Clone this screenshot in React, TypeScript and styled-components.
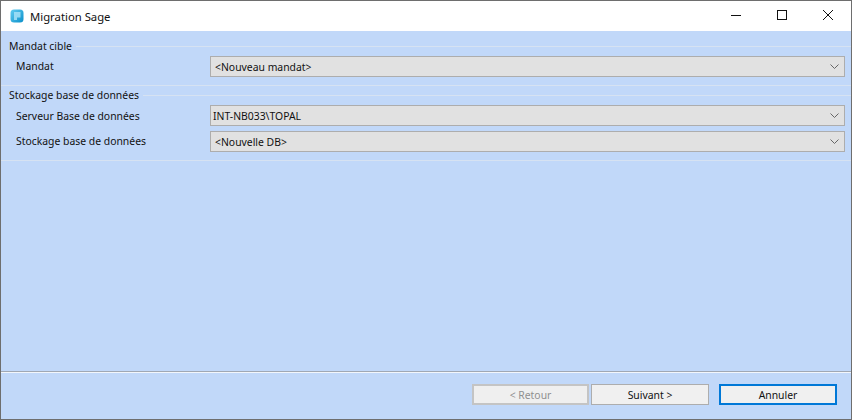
import React from "react";
import styled, { createGlobalStyle } from "styled-components";

const Global = createGlobalStyle`
  html, body { margin: 0; padding: 0; background: #c1d8f9; }
  body { overflow: hidden; }
`;

const Window = styled.div`
  box-sizing: border-box;
  width: 852px;
  height: 420px;
  border: 1px solid #6e6e6e;
  display: flex;
  flex-direction: column;
  background: #c1d8f9;
  font-family: "Noto Sans", "Liberation Sans", sans-serif;
  color: #111;
`;

const TitleBar = styled.div`
  height: 30px;
  flex: none;
  background: #fff;
  display: flex;
  align-items: center;
  padding-left: 9px;
`;

const Title = styled.span`
  margin-left: 6px;
  font-size: 11.3px;
  color: #111;
`;

const Controls = styled.div`
  margin-left: auto;
  display: flex;
  height: 100%;
  box-sizing: border-box;
  padding-bottom: 2px;
`;

const ControlButton = styled.div`
  width: 46px;
  height: 100%;
  display: flex;
  align-items: center;
  justify-content: center;
`;

const Body = styled.div`
  flex: 1;
  display: flex;
  flex-direction: column;
  padding: 8px 6px 0 8px;
`;

const GroupHeader = styled.div<{ $top?: number }>`
  display: flex;
  align-items: center;
  height: 14px;
  margin-top: ${(p) => p.$top ?? 0}px;
  font-size: 10.4px;
  line-height: 14px;
`;

const HeaderLine = styled.div`
  flex: 1;
  height: 1px;
  margin-left: 4px;
  margin-right: -6px;
  background: #d6e2f2;
`;

const Row = styled.div<{ $top: number }>`
  display: grid;
  grid-template-columns: 201px 635px;
  align-items: center;
  height: 21px;
  margin-top: ${(p) => p.$top}px;
  font-size: 10.4px;
`;

const RowLabel = styled.label<{ $lift: number }>`
  padding-left: 7px;
  margin-bottom: ${(p) => p.$lift}px;
`;

const Combo = styled.div<{ $inset?: number }>`
  box-sizing: border-box;
  height: 21px;
  background: #e1e1e1;
  border: 1px solid #adadad;
  display: flex;
  align-items: center;
  padding-left: ${(p) => p.$inset ?? 4}px;
  padding-right: 5px;
  justify-content: space-between;
`;

const Divider = styled.div<{ $top: number }>`
  height: 1px;
  margin: ${(p) => p.$top}px -6px 0 -8px;
  background: #d6e2f2;
`;

const Spacer = styled.div`
  flex: 1;
`;

const Footer = styled.div`
  flex: none;
  height: 48px;
  border-top: 1px solid #a0a8b4;
  box-shadow: inset 0 1px 0 #f2f6fc;
  display: flex;
  align-items: flex-start;
  padding: 12px 14px 0 471px;
  box-sizing: border-box;
`;

const Button = styled.div<{ $variant?: "disabled" | "focus"; $left?: number; $w: number }>`
  box-sizing: border-box;
  width: ${(p) => p.$w}px;
  height: 21px;
  margin-left: ${(p) => p.$left ?? 0}px;
  display: flex;
  align-items: center;
  justify-content: center;
  font-size: 10.4px;
  background: ${(p) => (p.$variant === "disabled" ? "#efefef" : "#f0f0f0")};
  color: ${(p) => (p.$variant === "disabled" ? "#8f8f8f" : "#111")};
  border: ${(p) =>
    p.$variant === "focus"
      ? "2px solid #0078d7"
      : p.$variant === "disabled"
      ? "2px solid #c4c4c4"
      : "1px solid #adadad"};
`;

const Chevron = () => (
  <svg width="9" height="5" viewBox="0 0 9 5" fill="none">
    <path d="M0.5 0.5 L4.5 4.5 L8.5 0.5" stroke="#666" strokeWidth="1" />
  </svg>
);

const AppIcon = () => (
  <svg width="14" height="14" viewBox="0 0 14 14">
    <defs>
      <linearGradient id="g" x1="0" y1="0" x2="1" y2="1">
        <stop offset="0" stopColor="#63cdf2" />
        <stop offset="1" stopColor="#0a8fc9" />
      </linearGradient>
    </defs>
    <rect x="0.5" y="0.5" width="13" height="13" rx="3.5" fill="url(#g)" />
    <path d="M4 3 H10.5 V8.5 H7 V11 H4 Z" fill="#a5e0f7" opacity="0.85" />
  </svg>
);

export default function App() {
  return (
    <Window>
      <Global />
      <TitleBar>
        <AppIcon />
        <Title>Migration Sage</Title>
        <Controls>
          <ControlButton>
            <svg width="10" height="10" viewBox="0 0 10 10">
              <path d="M0 5.5 H10" stroke="#111" strokeWidth="1" />
            </svg>
          </ControlButton>
          <ControlButton>
            <svg width="10" height="10" viewBox="0 0 10 10" fill="none">
              <rect x="0.5" y="0.5" width="9" height="9" stroke="#111" />
            </svg>
          </ControlButton>
          <ControlButton>
            <svg width="10" height="10" viewBox="0 0 10 10" fill="none">
              <path d="M0 0 L10 10 M10 0 L0 10" stroke="#111" strokeWidth="1" />
            </svg>
          </ControlButton>
        </Controls>
      </TitleBar>
      <Body>
        <GroupHeader>
          Mandat cible
          <HeaderLine />
        </GroupHeader>
        <Row $top={3}>
          <RowLabel $lift={2}>Mandat</RowLabel>
          <Combo>
            &lt;Nouveau mandat&gt;
            <Chevron />
          </Combo>
        </Row>
        <Divider $top={8} />
        <GroupHeader $top={2}>
          Stockage base de données
          <HeaderLine />
        </GroupHeader>
        <Row $top={3}>
          <RowLabel $lift={0}>Serveur Base de données</RowLabel>
          <Combo $inset={2}>
            INT-NB033\TOPAL
            <Chevron />
          </Combo>
        </Row>
        <Row $top={5}>
          <RowLabel $lift={2}>Stockage base de données</RowLabel>
          <Combo>
            &lt;Nouvelle DB&gt;
            <Chevron />
          </Combo>
        </Row>
        <Divider $top={8} />
        <Spacer />
      </Body>
      <Footer>
        <Button $variant="disabled" $w={117}>
          &lt; Retour
        </Button>
        <Button $w={118} $left={2}>
          Suivant &gt;
        </Button>
        <Button $variant="focus" $w={118} $left={10}>
          Annuler
        </Button>
      </Footer>
    </Window>
  );
}
